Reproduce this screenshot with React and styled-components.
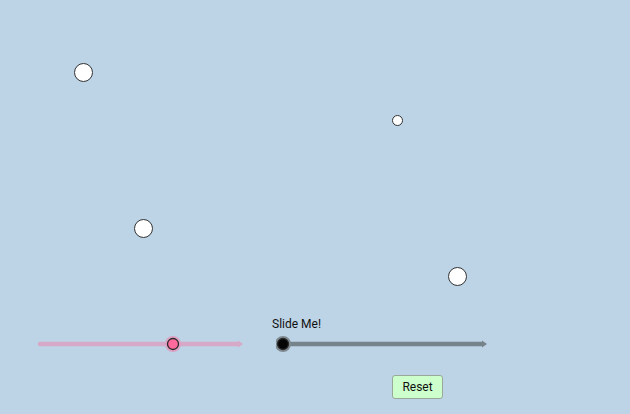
import React from 'react'
import styled, { createGlobalStyle } from 'styled-components'

const Global = createGlobalStyle`
  html, body {
    margin: 0;
    padding: 0;
    background: #bdd3e6;
    font-family: Roboto, "Liberation Sans", sans-serif;
  }
`

const Canvas = styled.div`
  position: relative;
  width: 630px;
  height: 414px;
  background: #bdd3e6;
  overflow: hidden;
`

// free points on the geometry canvas
const Point = styled.div`
  position: absolute;
  left: ${p => p.x - p.r}px;
  top: ${p => p.y - p.r}px;
  width: ${p => p.r * 2}px;
  height: ${p => p.r * 2}px;
  box-sizing: border-box;
  border-radius: 50%;
  background: #fff;
  border: 1.3px solid #333;
`

const SliderWrap = styled.div`
  position: absolute;
  left: ${p => p.x}px;
  top: ${p => p.y - 10}px;
  display: flex;
  flex-direction: column;
`

const Label = styled.div`
  position: absolute;
  left: -4px;
  top: -17px;
  font-size: 12px;
  color: #111;
  white-space: nowrap;
`

const ResetButton = styled.button`
  position: absolute;
  left: 392px;
  top: 375px;
  width: 51px;
  height: 24px;
  box-sizing: border-box;
  background: #ccffcc;
  border: 1px solid #9aa89a;
  border-radius: 3px;
  font-family: Roboto, "Liberation Sans", sans-serif;
  font-size: 12px;
  color: #111;
  padding: 0;
  cursor: pointer;
`

const Slider = ({ x, y, w, track, knob, halo, value, label }) => {
  const kx = 7 + value
  return (
    <SliderWrap x={x - 7} y={y}>
      {label && <Label>{label}</Label>}
      <svg width={w + 14} height="20">
        <line x1="9" y1="10" x2={w + 2} y2="10" stroke={track} strokeWidth="4.5" strokeLinecap="round" />
        <path d={`M ${w + 2} 6.5 L ${w + 7} 10 L ${w + 2} 13.5 Z`} fill={track} />
        <circle cx={kx} cy="10" r="8" fill={halo} />
        <circle cx={kx} cy="10" r="5.5" fill={knob} stroke="#2a2a2a" strokeWidth="1.3" />
      </svg>
    </SliderWrap>
  )
}

export default function App() {
  return (
    <>
      <Global />
      <Canvas>
        <Point x={83} y={72} r={9.5} />
        <Point x={397.5} y={120} r={5.5} />
        <Point x={143} y={228.5} r={9.5} />
        <Point x={457.5} y={276.5} r={9.5} />

        <Slider x={38} y={344} w={205} track="#d6a9c8" knob="#ff6a9c" halo="#dca2c4" value={135} />
        <Slider x={283} y={343.5} w={204} track="#76838a" knob="#050505" halo="#7f8a90" value={0} label="Slide Me!" />

        <ResetButton>Reset</ResetButton>
      </Canvas>
    </>
  )
}
